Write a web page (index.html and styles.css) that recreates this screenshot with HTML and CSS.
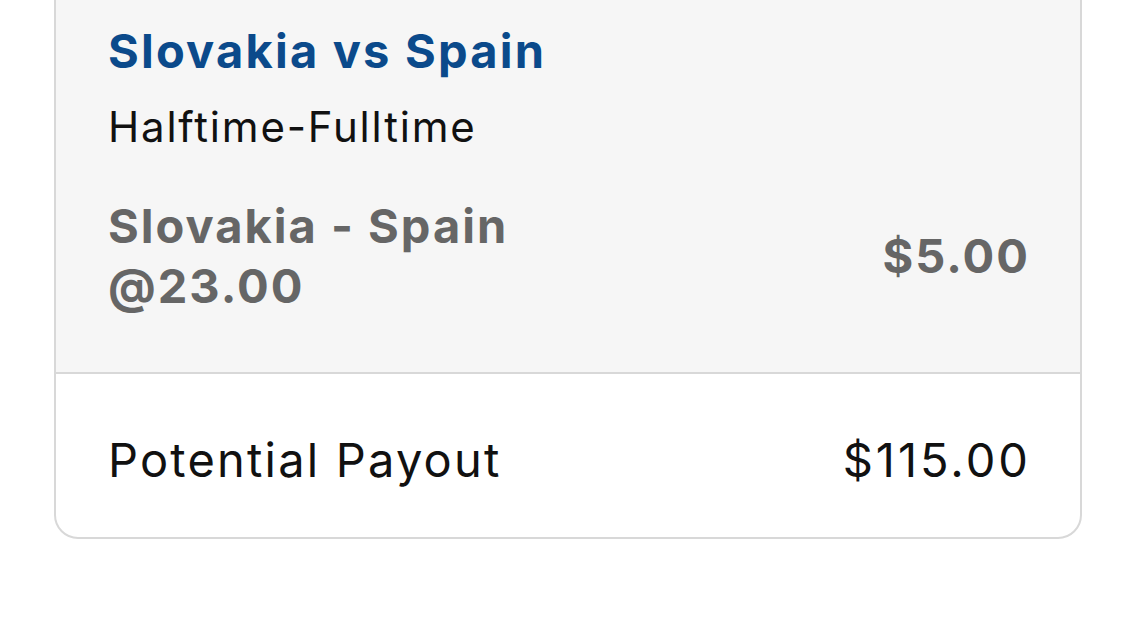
FILE: index.html
```html
<!DOCTYPE html>
<html>
<head>
<meta charset="utf-8">
<link rel="stylesheet" href="styles.css">
</head>
<body>
<div class="page">
  <div class="card">
    <div class="bet">
      <div class="match">Slovakia vs Spain</div>
      <div class="market">Halftime-Fulltime</div>
      <div class="selection-row">
        <div class="selection">Slovakia - Spain<br>@23.00</div>
        <div class="stake">$5.00</div>
      </div>
    </div>
    <div class="payout">
      <span class="payout-label">Potential Payout</span>
      <span class="payout-value">$115.00</span>
    </div>
  </div>
</div>
</body>
</html>
```

FILE: styles.css
```css
html, body {
  margin: 0;
  padding: 0;
  background: #ffffff;
}
body {
  font-family: Inter, "Noto Sans", sans-serif;
  width: 1136px;
  height: 640px;
  overflow: hidden;
}
.page {
  padding: 0 54px;
  margin-top: -40px;
}
.card {
  border: 2px solid #d8d8d8;
  border-radius: 0 0 24px 24px;
  overflow: hidden;
}
.bet {
  background: #f6f6f6;
  padding: 61px 52px 56px 52px;
  border-bottom: 2px solid #d8d8d8;
}
.match {
  color: #0b4a8b;
  font-weight: 700;
  font-size: 47px;
  line-height: 56px;
  letter-spacing: 2.2px;
}
.market {
  color: #111;
  font-size: 42px;
  line-height: 50px;
  letter-spacing: 1.8px;
  margin-top: 23px;
}
.selection-row {
  display: flex;
  justify-content: space-between;
  align-items: center;
  margin-top: 44px;
}
.selection {
  color: #666;
  font-weight: 700;
  font-size: 47px;
  line-height: 60px;
  letter-spacing: 2px;
}
.stake {
  color: #666;
  font-weight: 700;
  font-size: 47px;
  line-height: 60px;
  letter-spacing: 2px;
  margin-right: -2px;
}
.payout {
  display: flex;
  justify-content: space-between;
  align-items: center;
  padding: 56px 52px 47px 52px;
  color: #111;
  font-size: 47px;
  line-height: 60px;
  letter-spacing: 2.2px;
}
.payout-value {
  letter-spacing: 3px;
  margin-right: -3px;
}
```
